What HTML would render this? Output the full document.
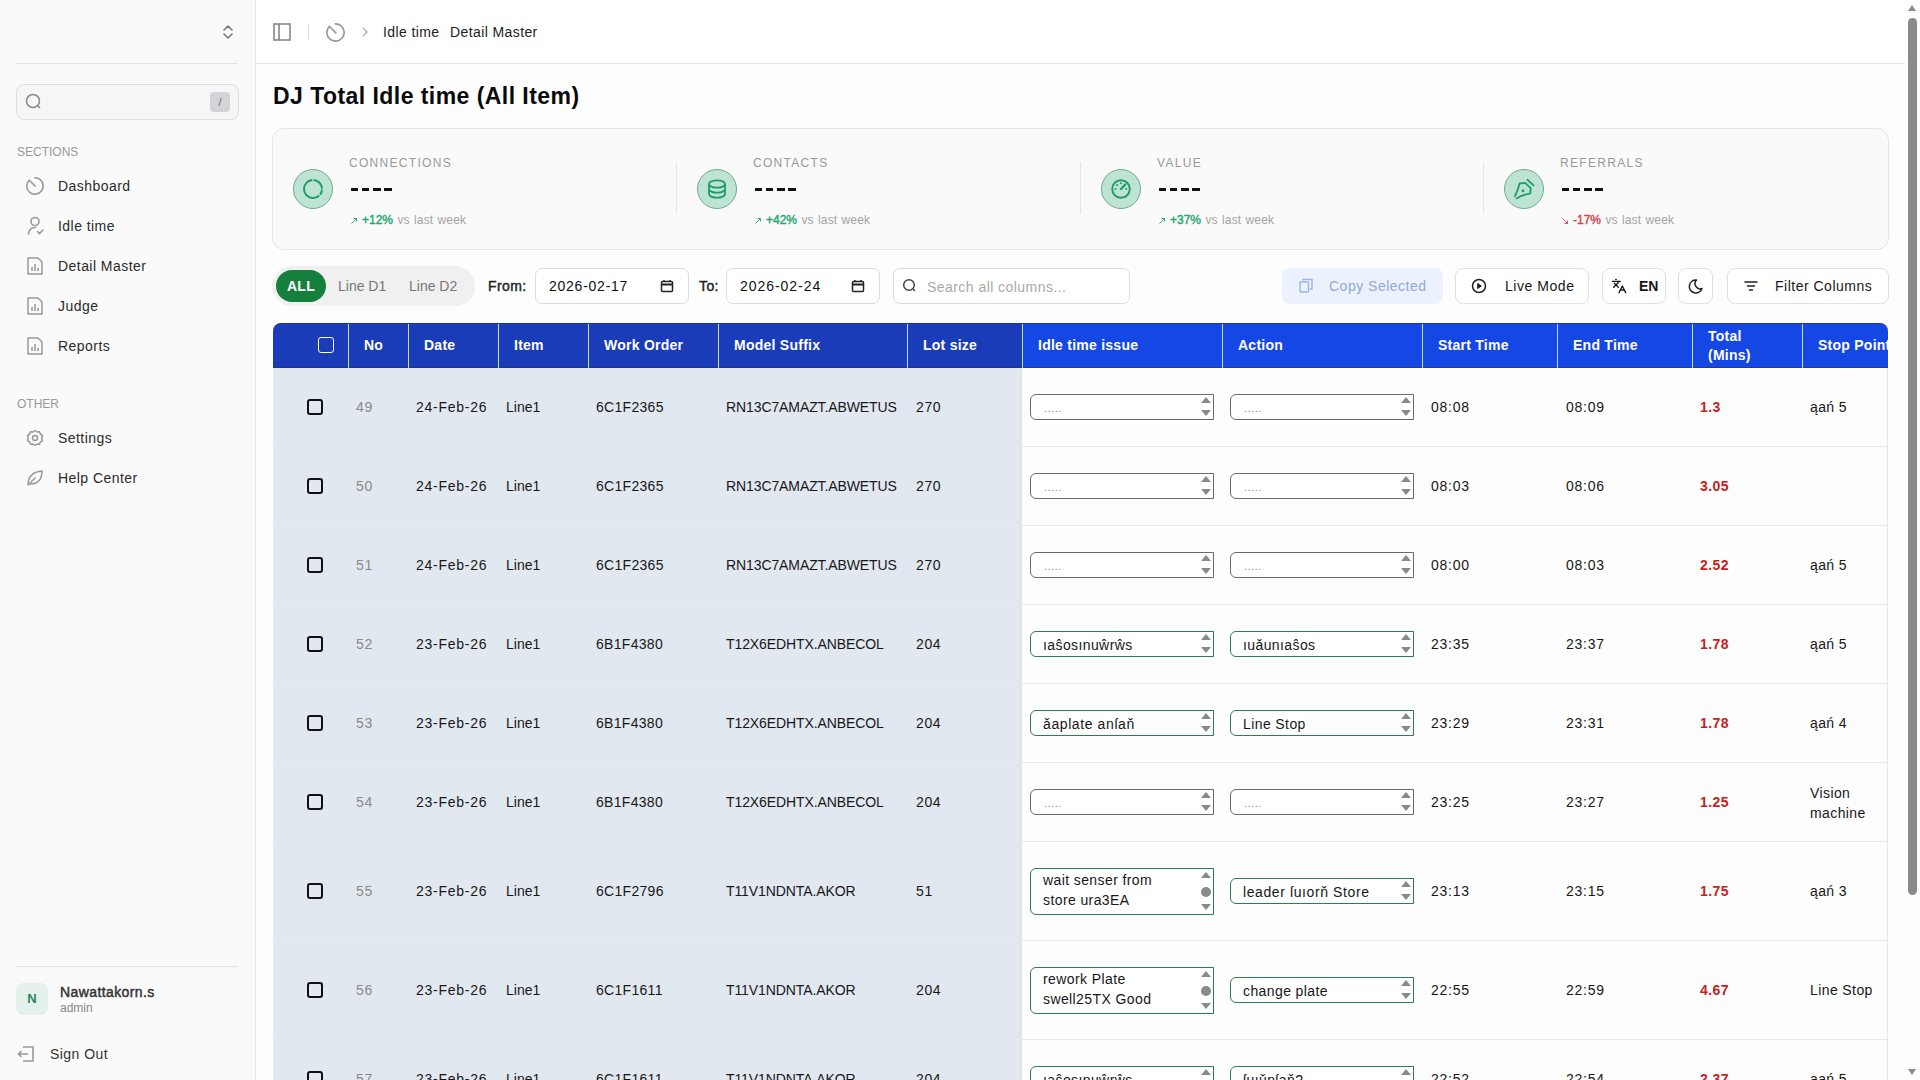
<!DOCTYPE html>
<html><head><meta charset="utf-8">
<style>
*{box-sizing:border-box;margin:0;padding:0}
html,body{width:1920px;height:1080px;overflow:hidden;background:#fafafa;font-family:"Liberation Sans",sans-serif;color:#0a0a0a}
.abs{position:absolute}
#side{position:absolute;left:0;top:0;width:256px;height:1080px;background:#fafafa;border-right:1px solid #e5e5e5}
#hdr{position:absolute;left:256px;top:0;width:1650px;height:64px;background:#fff;border-bottom:1px solid #e5e5e5}
#main{position:absolute;left:256px;top:64px;width:1650px;height:1016px;background:#fdfdfd}
.nav{position:absolute;left:58px;font-size:14px;color:#2b2b2b;letter-spacing:0.45px}
.navi{position:absolute;left:26px;width:18px;height:18px}
.lab{position:absolute;left:17px;font-size:12px;color:#999;letter-spacing:0}
svg{display:block}
.stat-ic{position:absolute;width:40px;height:40px;border-radius:50%;background:#bde4d3;border:1px solid #72a88f}
.stat-l{position:absolute;font-size:12px;letter-spacing:1.3px;color:#999}
.stat-v{position:absolute;font-size:22px;font-weight:bold;letter-spacing:1px;color:#111}
.stat-d{position:absolute;font-size:12px;color:#a3a3a3;letter-spacing:0.1px;word-spacing:1px}
.up{color:#1fa774;-webkit-text-stroke:0.4px #1fa774;letter-spacing:0}
.dn{color:#d9414a;-webkit-text-stroke:0.4px #d9414a;letter-spacing:0}
.btn{position:absolute;top:268px;height:36px;border:1px solid #e0e0e0;border-radius:8px;background:#fff;font-size:14px;color:#171717}
.inp{position:absolute;top:268px;height:36px;border:1px solid #dcdcdc;border-radius:7px;background:#fff;font-size:14px;color:#171717}
.th{position:absolute;top:323px;height:45px;color:#fff;font-weight:bold;font-size:14px;letter-spacing:0.25px}
</style></head><body>

<!-- SIDEBAR -->
<div id="side">
  <div class="abs" style="left:221px;top:23px;">
    <svg width="14" height="18" viewBox="0 0 14 18"><path d="M3 7 L7 3 L11 7 M3 11 L7 15 L11 11" fill="none" stroke="#777" stroke-width="1.6" stroke-linecap="round" stroke-linejoin="round"/></svg>
  </div>
  <div class="abs" style="left:16px;top:63px;width:222px;height:1px;background:#e5e5e5"></div>
  <div class="abs" style="left:16px;top:84px;width:223px;height:36px;border:1px solid #dedede;border-radius:8px;background:#f6f6f6"></div>
  <div class="abs" style="left:25px;top:93px;"><svg width="18" height="18" viewBox="0 0 18 18"><circle cx="8" cy="8" r="6.5" fill="none" stroke="#888" stroke-width="1.5"/><path d="M13 13 L15 15" stroke="#888" stroke-width="1.5"/></svg></div>
  <div class="abs" style="left:210px;top:92px;width:20px;height:20px;background:#d4d4d8;border-radius:4px;font-size:11px;color:#666;text-align:center;line-height:20px">/</div>

  <div class="lab" style="top:145px">SECTIONS</div>
  <div class="navi" style="top:177px"><svg width="18" height="18" viewBox="0 0 18 18"><circle cx="9" cy="9" r="8.2" fill="none" stroke="#999" stroke-width="1.6" stroke-dasharray="45.8 5.7" transform="rotate(265 9 9)"/><path d="M3.3 3.3 L9.3 9.3" stroke="#999" stroke-width="1.6" stroke-linecap="round"/></svg></div>
  <div class="nav" style="top:178px">Dashboard</div>
  <div class="navi" style="top:216px;left:27px"><svg width="18" height="20" viewBox="0 0 18 20"><circle cx="8" cy="5.5" r="4" fill="none" stroke="#999" stroke-width="1.6"/><path d="M1.5 18 C2 13 5 11.5 8.5 11.5" fill="none" stroke="#999" stroke-width="1.6" stroke-linecap="round"/><path d="M10.5 15.5 L12.5 17.5 L16 14" fill="none" stroke="#999" stroke-width="1.6" stroke-linecap="round"/></svg></div>
  <div class="nav" style="top:218px">Idle time</div>
  <div class="navi" style="top:257px"><svg width="18" height="18" viewBox="0 0 18 18"><path d="M2 1 H12 L16 5 V17 H2 Z" fill="none" stroke="#999" stroke-width="1.5"/><path d="M6 14 V10 M9 14 V7 M12 14 V11" stroke="#999" stroke-width="1.5"/></svg></div>
  <div class="nav" style="top:258px">Detail Master</div>
  <div class="navi" style="top:297px"><svg width="18" height="18" viewBox="0 0 18 18"><path d="M2 1 H12 L16 5 V17 H2 Z" fill="none" stroke="#999" stroke-width="1.5"/><path d="M6 14 V10 M9 14 V7 M12 14 V11" stroke="#999" stroke-width="1.5"/></svg></div>
  <div class="nav" style="top:298px">Judge</div>
  <div class="navi" style="top:337px"><svg width="18" height="18" viewBox="0 0 18 18"><path d="M2 1 H12 L16 5 V17 H2 Z" fill="none" stroke="#999" stroke-width="1.5"/><path d="M6 14 V10 M9 14 V7 M12 14 V11" stroke="#999" stroke-width="1.5"/></svg></div>
  <div class="nav" style="top:338px">Reports</div>

  <div class="lab" style="top:397px">OTHER</div>
  <div class="navi" style="top:429px"><svg width="18" height="18" viewBox="0 0 18 18"><path d="M9 1.5 L11 3 L13.5 2.7 L14.3 5 L16.5 6.3 L15.8 9 L16.5 11.7 L14.3 13 L13.5 15.3 L11 15 L9 16.5 L7 15 L4.5 15.3 L3.7 13 L1.5 11.7 L2.2 9 L1.5 6.3 L3.7 5 L4.5 2.7 L7 3 Z" fill="none" stroke="#999" stroke-width="1.5" stroke-linejoin="round"/><circle cx="9" cy="9" r="2.5" fill="none" stroke="#999" stroke-width="1.5"/></svg></div>
  <div class="nav" style="top:430px">Settings</div>
  <div class="navi" style="top:469px"><svg width="18" height="18" viewBox="0 0 18 18"><path d="M2 16 C2 8 6 3 16 2 C16 10 12 15 4 15 M2 16 L9 9" fill="none" stroke="#999" stroke-width="1.5" stroke-linecap="round"/></svg></div>
  <div class="nav" style="top:470px">Help Center</div>

  <div class="abs" style="left:16px;top:966px;width:222px;height:1px;background:#e5e5e5"></div>
  <div class="abs" style="left:16px;top:983px;width:32px;height:32px;border-radius:8px;background:#e3f0eb;color:#1f8a5b;font-weight:bold;font-size:13px;text-align:center;line-height:32px">N</div>
  <div class="abs" style="left:60px;top:984px;font-size:14px;color:#333;-webkit-text-stroke:0.45px #333;letter-spacing:0.4px">Nawattakorn.s</div>
  <div class="abs" style="left:60px;top:1001px;font-size:12px;color:#888">admin</div>
  <div class="abs" style="left:17px;top:1045px"><svg width="18" height="18" viewBox="0 0 18 18"><path d="M6 2 H16 V16 H6 M1.5 9 H11 M4.5 6 L1.5 9 L4.5 12" fill="none" stroke="#999" stroke-width="1.6"/></svg></div>
  <div class="abs" style="left:50px;top:1046px;font-size:14px;color:#333;letter-spacing:0.45px">Sign Out</div>
</div>

<!-- HEADER -->
<div id="hdr">
  <div class="abs" style="left:17px;top:23px"><svg width="18" height="18" viewBox="0 0 18 18"><rect x="1" y="1" width="16" height="16" fill="none" stroke="#888" stroke-width="1.6"/><path d="M6 1 V17" stroke="#888" stroke-width="1.6"/></svg></div>
  <div class="abs" style="left:52px;top:24px;width:1px;height:16px;background:#ddd"></div>
  <div class="abs" style="left:70px;top:23px"><svg width="19" height="19" viewBox="0 0 18 18"><circle cx="9" cy="9" r="8.2" fill="none" stroke="#999" stroke-width="1.6" stroke-dasharray="45.8 5.7" transform="rotate(265 9 9)"/><path d="M3.3 3.3 L9.3 9.3" stroke="#999" stroke-width="1.6" stroke-linecap="round"/></svg></div>
  <div class="abs" style="left:105px;top:25px"><svg width="8" height="14" viewBox="0 0 8 14"><path d="M2 3 L6 7 L2 11" fill="none" stroke="#aaa" stroke-width="1.4"/></svg></div>
  <div class="abs" style="left:127px;top:24px;font-size:14px;color:#222;letter-spacing:0.4px">Idle time</div>
  <div class="abs" style="left:194px;top:24px;font-size:14px;color:#222;letter-spacing:0.4px">Detail Master</div>
</div>

<!-- MAIN -->
<div id="main"></div>
<div class="abs" style="left:273px;top:83px;font-size:23px;line-height:26px;font-weight:bold;letter-spacing:0.45px;color:#0a0a0a">DJ Total Idle time (All Item)</div>

<!-- STATS CARD -->
<div class="abs" style="left:272px;top:128px;width:1617px;height:122px;border:1px solid #e5e5e5;border-radius:12px;background:#fafafa"></div>
<div class="abs" style="left:676px;top:162px;width:1px;height:52px;background:#e5e5e5"></div>
<div class="abs" style="left:1080px;top:162px;width:1px;height:52px;background:#e5e5e5"></div>
<div class="abs" style="left:1483px;top:162px;width:1px;height:52px;background:#e5e5e5"></div>

<div class="stat-ic" style="left:293px;top:169px"></div>
<div class="abs" style="left:293px;top:169px"><svg width="40" height="40" viewBox="0 0 40 40"><circle cx="20" cy="20" r="9" fill="none" stroke="#1f9a6a" stroke-width="2" stroke-dasharray="5.34 1.26 34.24 1.26 13.19 1.26" transform="rotate(4 20 20)"/></svg></div>
<div class="stat-l" style="left:349px;top:156px">CONNECTIONS</div>
<div class="abs" style="left:350.5px;top:188px;width:7.8px;height:3px;background:#111"></div>
<div class="abs" style="left:361.6px;top:188px;width:7.8px;height:3px;background:#111"></div>
<div class="abs" style="left:372.8px;top:188px;width:7.8px;height:3px;background:#111"></div>
<div class="abs" style="left:383.9px;top:188px;width:7.8px;height:3px;background:#111"></div>
<div class="abs" style="left:350px;top:217px"><svg width="8" height="8" viewBox="0 0 8 8"><path d="M1.5 6.5 L6.5 1.5 M3.5 1.5 H6.5 V4.5" fill="none" stroke="#1fa774" stroke-width="0.9"/></svg></div>
<div class="stat-d" style="left:362px;top:213px"><span class="up">+12%</span> vs last week</div>
<div class="stat-ic" style="left:697px;top:169px"></div>
<div class="abs" style="left:697px;top:169px"><svg width="40" height="40" viewBox="0 0 40 40"><ellipse cx="20" cy="15" rx="8" ry="3.7" fill="none" stroke="#1f9a6a" stroke-width="1.8"/><path d="M12 15 V25 A8 3.7 0 0 0 28 25 V15 M12 20 A8 3.7 0 0 0 28 20" fill="none" stroke="#1f9a6a" stroke-width="1.8"/></svg></div>
<div class="stat-l" style="left:753px;top:156px">CONTACTS</div>
<div class="abs" style="left:754.5px;top:188px;width:7.8px;height:3px;background:#111"></div>
<div class="abs" style="left:765.6px;top:188px;width:7.8px;height:3px;background:#111"></div>
<div class="abs" style="left:776.8px;top:188px;width:7.8px;height:3px;background:#111"></div>
<div class="abs" style="left:788.0px;top:188px;width:7.8px;height:3px;background:#111"></div>
<div class="abs" style="left:754px;top:217px"><svg width="8" height="8" viewBox="0 0 8 8"><path d="M1.5 6.5 L6.5 1.5 M3.5 1.5 H6.5 V4.5" fill="none" stroke="#1fa774" stroke-width="0.9"/></svg></div>
<div class="stat-d" style="left:766px;top:213px"><span class="up">+42%</span> vs last week</div>
<div class="stat-ic" style="left:1101px;top:169px"></div>
<div class="abs" style="left:1101px;top:169px"><svg width="40" height="40" viewBox="0 0 40 40"><circle cx="20" cy="20" r="8.8" fill="none" stroke="#1f9a6a" stroke-width="1.9"/><path d="M20 20 L24.3 15.5" stroke="#1f9a6a" stroke-width="2.2" stroke-linecap="round"/><circle cx="14.5" cy="20" r="1" fill="#1f9a6a"/><circle cx="16.2" cy="16" r="1" fill="#1f9a6a"/><circle cx="20" cy="14.2" r="1" fill="#1f9a6a"/><circle cx="25.3" cy="20" r="1" fill="#1f9a6a"/></svg></div>
<div class="stat-l" style="left:1157px;top:156px">VALUE</div>
<div class="abs" style="left:1158.5px;top:188px;width:7.8px;height:3px;background:#111"></div>
<div class="abs" style="left:1169.7px;top:188px;width:7.8px;height:3px;background:#111"></div>
<div class="abs" style="left:1180.8px;top:188px;width:7.8px;height:3px;background:#111"></div>
<div class="abs" style="left:1192.0px;top:188px;width:7.8px;height:3px;background:#111"></div>
<div class="abs" style="left:1158px;top:217px"><svg width="8" height="8" viewBox="0 0 8 8"><path d="M1.5 6.5 L6.5 1.5 M3.5 1.5 H6.5 V4.5" fill="none" stroke="#1fa774" stroke-width="0.9"/></svg></div>
<div class="stat-d" style="left:1170px;top:213px"><span class="up">+37%</span> vs last week</div>
<div class="stat-ic" style="left:1504px;top:169px"></div>
<div class="abs" style="left:1504px;top:169px"><svg width="40" height="40" viewBox="0 0 40 40"><path d="M10.9 27.2 C13 23 14.5 19 15.6 14.5 L21.1 13.8 L26.7 19.1 L26.2 24.7 C21 25.5 16 27 12.6 29.4" fill="none" stroke="#1f9a6a" stroke-width="1.8" stroke-linejoin="round" stroke-linecap="round"/><path d="M23.5 10.8 L29.6 16.4" stroke="#1f9a6a" stroke-width="1.8" stroke-linecap="round"/><circle cx="19" cy="21.9" r="1.4" fill="#1f9a6a"/></svg></div>
<div class="stat-l" style="left:1560px;top:156px">REFERRALS</div>
<div class="abs" style="left:1561.5px;top:188px;width:7.8px;height:3px;background:#111"></div>
<div class="abs" style="left:1572.7px;top:188px;width:7.8px;height:3px;background:#111"></div>
<div class="abs" style="left:1583.8px;top:188px;width:7.8px;height:3px;background:#111"></div>
<div class="abs" style="left:1595.0px;top:188px;width:7.8px;height:3px;background:#111"></div>
<div class="abs" style="left:1561px;top:217px"><svg width="8" height="8" viewBox="0 0 8 8"><path d="M1.5 1.5 L6.5 6.5 M3.5 6.5 H6.5 V3.5" fill="none" stroke="#d9414a" stroke-width="0.9"/></svg></div>
<div class="stat-d" style="left:1573px;top:213px"><span class="dn">-17%</span> vs last week</div>

<!-- TOOLBAR -->
<div class="abs" style="left:272px;top:266px;width:203px;height:40px;border-radius:20px;background:#f0f0f0"></div>
<div class="abs" style="left:276px;top:270px;width:50px;height:32px;border-radius:16px;background:#15803d;color:#fff;font-weight:bold;font-size:14px;text-align:center;line-height:32px;letter-spacing:0.3px">ALL</div>
<div class="abs" style="left:338px;top:278px;font-size:14px;color:#777">Line D1</div>
<div class="abs" style="left:409px;top:278px;font-size:14px;color:#777">Line D2</div>
<div class="abs" style="left:488px;top:278px;font-size:14px;color:#222;-webkit-text-stroke:0.4px #222;letter-spacing:0.4px">From:</div>
<div class="inp" style="left:535px;width:154px"></div><div class="abs" style="left:549px;top:278px;font-size:14px;letter-spacing:0.75px;color:#111">2026-02-17</div><div class="abs" style="left:660px;top:279px"><svg width="14" height="14" viewBox="0 0 14 14"><rect x="1.5" y="2.5" width="11" height="10" rx="1" fill="none" stroke="#222" stroke-width="1.5"/><path d="M1.5 5.5 H12.5" stroke="#222" stroke-width="2"/><path d="M4 1 V3 M10 1 V3" stroke="#222" stroke-width="1.4"/></svg></div>
<div class="abs" style="left:699px;top:278px;font-size:14px;color:#222;-webkit-text-stroke:0.4px #222;letter-spacing:0.4px">To:</div>
<div class="inp" style="left:726px;width:154px"></div><div class="abs" style="left:740px;top:278px;font-size:14px;letter-spacing:0.95px;color:#111">2026-02-24</div><div class="abs" style="left:851px;top:279px"><svg width="14" height="14" viewBox="0 0 14 14"><rect x="1.5" y="2.5" width="11" height="10" rx="1" fill="none" stroke="#222" stroke-width="1.5"/><path d="M1.5 5.5 H12.5" stroke="#222" stroke-width="2"/><path d="M4 1 V3 M10 1 V3" stroke="#222" stroke-width="1.4"/></svg></div>
<div class="inp" style="left:893px;width:237px"></div><div class="abs" style="left:902px;top:278px"><svg width="16" height="16" viewBox="0 0 16 16"><circle cx="7" cy="7" r="5.3" fill="none" stroke="#444" stroke-width="1.5"/><path d="M11 11 L13 13" stroke="#444" stroke-width="1.5"/></svg></div><div class="abs" style="left:927px;top:279px;font-size:14px;color:#aaa;letter-spacing:0.45px">Search all columns...</div>
<div class="abs" style="left:1282px;top:268px;width:161px;height:36px;border-radius:8px;background:#ecf2fd"></div>
<div class="abs" style="left:1299px;top:278px"><svg width="14" height="16" viewBox="0 0 14 16"><rect x="1" y="4" width="8.5" height="10" rx="1" fill="none" stroke="#9db3df" stroke-width="1.4"/><path d="M4 2.5 V1.5 H13 V11 H11" fill="none" stroke="#9db3df" stroke-width="1.4"/></svg></div>
<div class="abs" style="left:1329px;top:278px;font-size:14px;color:#92a8d8;letter-spacing:0.5px">Copy Selected</div>
<div class="btn" style="left:1455px;width:134px"></div><div class="abs" style="left:1471px;top:278px"><svg width="16" height="16" viewBox="0 0 16 16"><circle cx="8" cy="8" r="6.5" fill="none" stroke="#222" stroke-width="1.5"/><path d="M6.7 5.5 L10.3 8 L6.7 10.5 Z" fill="#222" stroke="#222" stroke-width="1" stroke-linejoin="round"/></svg></div><div class="abs" style="left:1505px;top:278px;font-size:14px;color:#171717;letter-spacing:0.55px">Live Mode</div>
<div class="btn" style="left:1602px;width:64px"></div><div class="abs" style="left:1610.7px;top:278px"><svg width="16" height="16" viewBox="0 0 24 24"><path d="M5 8 L11 14 M4 14 L10 8 L12 5 M2 5 H14 M7 2 H8 M22 22 L17 12 L12 22 M14 18 H20" fill="none" stroke="#171717" stroke-width="2" stroke-linecap="round" stroke-linejoin="round"/></svg></div><div class="abs" style="left:1639px;top:278px;font-size:14px;font-weight:bold;color:#171717">EN</div>
<div class="btn" style="left:1678px;width:35px"></div><div class="abs" style="left:1687px;top:278px"><svg width="17" height="17" viewBox="0 0 17 17"><path d="M9.5 2 A6.5 6.5 0 1 0 15 10.5 A5.2 5.2 0 0 1 9.5 2 Z" fill="none" stroke="#222" stroke-width="1.5" stroke-linejoin="round"/></svg></div>
<div class="btn" style="left:1727px;width:162px"></div><div class="abs" style="left:1743px;top:279px"><svg width="16" height="14" viewBox="0 0 16 14"><path d="M2 3 H14 M4.5 7 H11.5 M6.5 11 H9.5" stroke="#222" stroke-width="1.5" stroke-linecap="round"/></svg></div><div class="abs" style="left:1775px;top:278px;font-size:14px;color:#171717;letter-spacing:0.5px">Filter Columns</div>

<!-- TABLE -->
<div class="abs" style="left:273px;top:368px;width:749px;height:712px;background:#e2e8f0"></div>
<div class="abs" style="left:1022px;top:368px;width:866px;height:712px;background:#fdfdfd;border-right:1px solid #e5e5e5"></div>
<div class="abs" style="left:1019px;top:368px;width:3px;height:712px;background:linear-gradient(90deg,rgba(226,228,232,0),#dfe2e6)"></div>
<div class="abs" style="left:273px;top:323px;width:749px;height:45px;background:#1b3cb9;border-top-left-radius:8px;border-top:1px solid #1a3596;border-bottom:1px solid #1a3596"></div>
<div class="abs" style="left:1022px;top:323px;width:866px;height:45px;background:#1547e5;border-top-right-radius:8px;border-top:1px solid #1a3aa6;border-bottom:1px solid #1a3aa6"></div>
<div class="abs" style="left:348px;top:324px;width:1px;height:44px;background:#c4d9fb"></div>
<div class="abs" style="left:408px;top:324px;width:1px;height:44px;background:#c4d9fb"></div>
<div class="abs" style="left:498px;top:324px;width:1px;height:44px;background:#c4d9fb"></div>
<div class="abs" style="left:588px;top:324px;width:1px;height:44px;background:#c4d9fb"></div>
<div class="abs" style="left:718px;top:324px;width:1px;height:44px;background:#c4d9fb"></div>
<div class="abs" style="left:907px;top:324px;width:1px;height:44px;background:#c4d9fb"></div>
<div class="abs" style="left:1022px;top:324px;width:1px;height:44px;background:#c4d9fb"></div>
<div class="abs" style="left:1222px;top:324px;width:1px;height:44px;background:#c4d9fb"></div>
<div class="abs" style="left:1422px;top:324px;width:1px;height:44px;background:#c4d9fb"></div>
<div class="abs" style="left:1557px;top:324px;width:1px;height:44px;background:#c4d9fb"></div>
<div class="abs" style="left:1692px;top:324px;width:1px;height:44px;background:#c4d9fb"></div>
<div class="abs" style="left:1802px;top:324px;width:1px;height:44px;background:#c4d9fb"></div>
<div class="abs" style="left:318px;top:337px;width:16px;height:16px;border:1px solid #fff;border-radius:3px"></div>
<div class="th" style="left:364px;line-height:45px;white-space:nowrap;overflow:hidden;width:44px">No</div>
<div class="th" style="left:424px;line-height:45px;white-space:nowrap;overflow:hidden;width:74px">Date</div>
<div class="th" style="left:514px;line-height:45px;white-space:nowrap;overflow:hidden;width:74px">Item</div>
<div class="th" style="left:604px;line-height:45px;white-space:nowrap;overflow:hidden;width:114px">Work Order</div>
<div class="th" style="left:734px;line-height:45px;white-space:nowrap;overflow:hidden;width:173px">Model Suffix</div>
<div class="th" style="left:923px;line-height:45px;white-space:nowrap;overflow:hidden;width:99px">Lot size</div>
<div class="th" style="left:1038px;line-height:45px;white-space:nowrap;overflow:hidden;width:184px">Idle time issue</div>
<div class="th" style="left:1238px;line-height:45px;white-space:nowrap;overflow:hidden;width:184px">Action</div>
<div class="th" style="left:1438px;line-height:45px;white-space:nowrap;overflow:hidden;width:119px">Start Time</div>
<div class="th" style="left:1573px;line-height:45px;white-space:nowrap;overflow:hidden;width:119px">End Time</div>
<div class="th" style="left:1708px;top:326px;line-height:19px;padding-top:1px">Total<br>(Mins)</div>
<div class="th" style="left:1818px;line-height:45px;white-space:nowrap;overflow:hidden;width:70px">Stop Point</div>
<div class="abs" style="left:273px;top:446px;width:746px;height:1px;background:#e6ebf1"></div>
<div class="abs" style="left:1022px;top:446px;width:866px;height:1px;background:#e8e8e8"></div>
<div class="abs" style="left:273px;top:525px;width:746px;height:1px;background:#e6ebf1"></div>
<div class="abs" style="left:1022px;top:525px;width:866px;height:1px;background:#e8e8e8"></div>
<div class="abs" style="left:273px;top:604px;width:746px;height:1px;background:#e6ebf1"></div>
<div class="abs" style="left:1022px;top:604px;width:866px;height:1px;background:#e8e8e8"></div>
<div class="abs" style="left:273px;top:683px;width:746px;height:1px;background:#e6ebf1"></div>
<div class="abs" style="left:1022px;top:683px;width:866px;height:1px;background:#e8e8e8"></div>
<div class="abs" style="left:273px;top:762px;width:746px;height:1px;background:#e6ebf1"></div>
<div class="abs" style="left:1022px;top:762px;width:866px;height:1px;background:#e8e8e8"></div>
<div class="abs" style="left:273px;top:841px;width:746px;height:1px;background:#e6ebf1"></div>
<div class="abs" style="left:1022px;top:841px;width:866px;height:1px;background:#e8e8e8"></div>
<div class="abs" style="left:273px;top:940px;width:746px;height:1px;background:#e6ebf1"></div>
<div class="abs" style="left:1022px;top:940px;width:866px;height:1px;background:#e8e8e8"></div>
<div class="abs" style="left:273px;top:1039px;width:746px;height:1px;background:#e6ebf1"></div>
<div class="abs" style="left:1022px;top:1039px;width:866px;height:1px;background:#e8e8e8"></div>
<div class="abs" style="left:307px;top:399px;width:16px;height:16px;border:2px solid #111;border-radius:3px"></div>
<div class="abs" style="left:356px;top:398px;font-size:14px;line-height:18px;color:#8a8a8a;white-space:nowrap;letter-spacing:0.8px">49</div>
<div class="abs" style="left:416px;top:398px;font-size:14px;line-height:18px;color:#171717;white-space:nowrap;letter-spacing:0.75px">24-Feb-26</div>
<div class="abs" style="left:506px;top:398px;font-size:14px;line-height:18px;color:#171717;white-space:nowrap;letter-spacing:0px">Line1</div>
<div class="abs" style="left:596px;top:398px;font-size:14px;line-height:18px;color:#171717;white-space:nowrap;letter-spacing:0.3px">6C1F2365</div>
<div class="abs" style="left:726px;top:398px;font-size:14px;line-height:18px;color:#171717;white-space:nowrap;letter-spacing:-0.1px">RN13C7AMAZT.ABWETUS</div>
<div class="abs" style="left:916px;top:398px;font-size:14px;line-height:18px;color:#171717;white-space:nowrap;letter-spacing:0.6px">270</div>
<div class="abs" style="left:1030px;top:394px;width:184px;height:26px;border:1px solid #6b6b6b;border-radius:6px 0 0 6px;background:#fff"></div><div class="abs" style="left:1044px;top:402px;font-size:11px;color:#888;letter-spacing:0.5px">.....</div><div class="abs" style="left:1201px;top:397px;width:0;height:0;border-left:5px solid transparent;border-right:5px solid transparent;border-bottom:6px solid #8a8a8a"></div><div class="abs" style="left:1201px;top:410px;width:0;height:0;border-left:5px solid transparent;border-right:5px solid transparent;border-top:6px solid #8a8a8a"></div>
<div class="abs" style="left:1230px;top:394px;width:184px;height:26px;border:1px solid #6b6b6b;border-radius:6px 0 0 6px;background:#fff"></div><div class="abs" style="left:1244px;top:402px;font-size:11px;color:#888;letter-spacing:0.5px">.....</div><div class="abs" style="left:1401px;top:397px;width:0;height:0;border-left:5px solid transparent;border-right:5px solid transparent;border-bottom:6px solid #8a8a8a"></div><div class="abs" style="left:1401px;top:410px;width:0;height:0;border-left:5px solid transparent;border-right:5px solid transparent;border-top:6px solid #8a8a8a"></div>
<div class="abs" style="left:1431px;top:398px;font-size:14px;line-height:18px;color:#171717;letter-spacing:0.75px">08:08</div>
<div class="abs" style="left:1566px;top:398px;font-size:14px;line-height:18px;color:#171717;letter-spacing:0.75px">08:09</div>
<div class="abs" style="left:1700px;top:398px;font-size:14px;line-height:18px;color:#c81e1e;font-weight:bold;letter-spacing:0.4px">1.3</div>
<div class="abs" style="left:1810px;top:398px;font-size:14px;line-height:18px;color:#171717;white-space:nowrap;letter-spacing:0.4px">ąań 5</div>
<div class="abs" style="left:307px;top:478px;width:16px;height:16px;border:2px solid #111;border-radius:3px"></div>
<div class="abs" style="left:356px;top:477px;font-size:14px;line-height:18px;color:#8a8a8a;white-space:nowrap;letter-spacing:0.8px">50</div>
<div class="abs" style="left:416px;top:477px;font-size:14px;line-height:18px;color:#171717;white-space:nowrap;letter-spacing:0.75px">24-Feb-26</div>
<div class="abs" style="left:506px;top:477px;font-size:14px;line-height:18px;color:#171717;white-space:nowrap;letter-spacing:0px">Line1</div>
<div class="abs" style="left:596px;top:477px;font-size:14px;line-height:18px;color:#171717;white-space:nowrap;letter-spacing:0.3px">6C1F2365</div>
<div class="abs" style="left:726px;top:477px;font-size:14px;line-height:18px;color:#171717;white-space:nowrap;letter-spacing:-0.1px">RN13C7AMAZT.ABWETUS</div>
<div class="abs" style="left:916px;top:477px;font-size:14px;line-height:18px;color:#171717;white-space:nowrap;letter-spacing:0.6px">270</div>
<div class="abs" style="left:1030px;top:473px;width:184px;height:26px;border:1px solid #6b6b6b;border-radius:6px 0 0 6px;background:#fff"></div><div class="abs" style="left:1044px;top:481px;font-size:11px;color:#888;letter-spacing:0.5px">.....</div><div class="abs" style="left:1201px;top:476px;width:0;height:0;border-left:5px solid transparent;border-right:5px solid transparent;border-bottom:6px solid #8a8a8a"></div><div class="abs" style="left:1201px;top:489px;width:0;height:0;border-left:5px solid transparent;border-right:5px solid transparent;border-top:6px solid #8a8a8a"></div>
<div class="abs" style="left:1230px;top:473px;width:184px;height:26px;border:1px solid #6b6b6b;border-radius:6px 0 0 6px;background:#fff"></div><div class="abs" style="left:1244px;top:481px;font-size:11px;color:#888;letter-spacing:0.5px">.....</div><div class="abs" style="left:1401px;top:476px;width:0;height:0;border-left:5px solid transparent;border-right:5px solid transparent;border-bottom:6px solid #8a8a8a"></div><div class="abs" style="left:1401px;top:489px;width:0;height:0;border-left:5px solid transparent;border-right:5px solid transparent;border-top:6px solid #8a8a8a"></div>
<div class="abs" style="left:1431px;top:477px;font-size:14px;line-height:18px;color:#171717;letter-spacing:0.75px">08:03</div>
<div class="abs" style="left:1566px;top:477px;font-size:14px;line-height:18px;color:#171717;letter-spacing:0.75px">08:06</div>
<div class="abs" style="left:1700px;top:477px;font-size:14px;line-height:18px;color:#c81e1e;font-weight:bold;letter-spacing:0.4px">3.05</div>
<div class="abs" style="left:1810px;top:477px;font-size:14px;line-height:18px;color:#171717;white-space:nowrap;letter-spacing:0.4px"></div>
<div class="abs" style="left:307px;top:557px;width:16px;height:16px;border:2px solid #111;border-radius:3px"></div>
<div class="abs" style="left:356px;top:556px;font-size:14px;line-height:18px;color:#8a8a8a;white-space:nowrap;letter-spacing:0.8px">51</div>
<div class="abs" style="left:416px;top:556px;font-size:14px;line-height:18px;color:#171717;white-space:nowrap;letter-spacing:0.75px">24-Feb-26</div>
<div class="abs" style="left:506px;top:556px;font-size:14px;line-height:18px;color:#171717;white-space:nowrap;letter-spacing:0px">Line1</div>
<div class="abs" style="left:596px;top:556px;font-size:14px;line-height:18px;color:#171717;white-space:nowrap;letter-spacing:0.3px">6C1F2365</div>
<div class="abs" style="left:726px;top:556px;font-size:14px;line-height:18px;color:#171717;white-space:nowrap;letter-spacing:-0.1px">RN13C7AMAZT.ABWETUS</div>
<div class="abs" style="left:916px;top:556px;font-size:14px;line-height:18px;color:#171717;white-space:nowrap;letter-spacing:0.6px">270</div>
<div class="abs" style="left:1030px;top:552px;width:184px;height:26px;border:1px solid #6b6b6b;border-radius:6px 0 0 6px;background:#fff"></div><div class="abs" style="left:1044px;top:560px;font-size:11px;color:#888;letter-spacing:0.5px">.....</div><div class="abs" style="left:1201px;top:555px;width:0;height:0;border-left:5px solid transparent;border-right:5px solid transparent;border-bottom:6px solid #8a8a8a"></div><div class="abs" style="left:1201px;top:568px;width:0;height:0;border-left:5px solid transparent;border-right:5px solid transparent;border-top:6px solid #8a8a8a"></div>
<div class="abs" style="left:1230px;top:552px;width:184px;height:26px;border:1px solid #6b6b6b;border-radius:6px 0 0 6px;background:#fff"></div><div class="abs" style="left:1244px;top:560px;font-size:11px;color:#888;letter-spacing:0.5px">.....</div><div class="abs" style="left:1401px;top:555px;width:0;height:0;border-left:5px solid transparent;border-right:5px solid transparent;border-bottom:6px solid #8a8a8a"></div><div class="abs" style="left:1401px;top:568px;width:0;height:0;border-left:5px solid transparent;border-right:5px solid transparent;border-top:6px solid #8a8a8a"></div>
<div class="abs" style="left:1431px;top:556px;font-size:14px;line-height:18px;color:#171717;letter-spacing:0.75px">08:00</div>
<div class="abs" style="left:1566px;top:556px;font-size:14px;line-height:18px;color:#171717;letter-spacing:0.75px">08:03</div>
<div class="abs" style="left:1700px;top:556px;font-size:14px;line-height:18px;color:#c81e1e;font-weight:bold;letter-spacing:0.4px">2.52</div>
<div class="abs" style="left:1810px;top:556px;font-size:14px;line-height:18px;color:#171717;white-space:nowrap;letter-spacing:0.4px">ąań 5</div>
<div class="abs" style="left:307px;top:636px;width:16px;height:16px;border:2px solid #111;border-radius:3px"></div>
<div class="abs" style="left:356px;top:635px;font-size:14px;line-height:18px;color:#8a8a8a;white-space:nowrap;letter-spacing:0.8px">52</div>
<div class="abs" style="left:416px;top:635px;font-size:14px;line-height:18px;color:#171717;white-space:nowrap;letter-spacing:0.75px">23-Feb-26</div>
<div class="abs" style="left:506px;top:635px;font-size:14px;line-height:18px;color:#171717;white-space:nowrap;letter-spacing:0px">Line1</div>
<div class="abs" style="left:596px;top:635px;font-size:14px;line-height:18px;color:#171717;white-space:nowrap;letter-spacing:0.3px">6B1F4380</div>
<div class="abs" style="left:726px;top:635px;font-size:14px;line-height:18px;color:#171717;white-space:nowrap;letter-spacing:-0.1px">T12X6EDHTX.ANBECOL</div>
<div class="abs" style="left:916px;top:635px;font-size:14px;line-height:18px;color:#171717;white-space:nowrap;letter-spacing:0.6px">204</div>
<div class="abs" style="left:1030px;top:631px;width:184px;height:26px;border:1px solid #2e7d4f;border-radius:6px 0 0 6px;background:#fff"></div><div class="abs" style="left:1043px;top:635px;font-size:14px;line-height:20px;color:#171717;white-space:nowrap;letter-spacing:0.4px">ıaŝosınuŵrŵs</div><div class="abs" style="left:1201px;top:634px;width:0;height:0;border-left:5px solid transparent;border-right:5px solid transparent;border-bottom:6px solid #8a8a8a"></div><div class="abs" style="left:1201px;top:647px;width:0;height:0;border-left:5px solid transparent;border-right:5px solid transparent;border-top:6px solid #8a8a8a"></div>
<div class="abs" style="left:1230px;top:631px;width:184px;height:26px;border:1px solid #2e7d4f;border-radius:6px 0 0 6px;background:#fff"></div><div class="abs" style="left:1243px;top:635px;font-size:14px;line-height:20px;color:#171717;white-space:nowrap;letter-spacing:0.4px">ıuǎunıaŝos</div><div class="abs" style="left:1401px;top:634px;width:0;height:0;border-left:5px solid transparent;border-right:5px solid transparent;border-bottom:6px solid #8a8a8a"></div><div class="abs" style="left:1401px;top:647px;width:0;height:0;border-left:5px solid transparent;border-right:5px solid transparent;border-top:6px solid #8a8a8a"></div>
<div class="abs" style="left:1431px;top:635px;font-size:14px;line-height:18px;color:#171717;letter-spacing:0.75px">23:35</div>
<div class="abs" style="left:1566px;top:635px;font-size:14px;line-height:18px;color:#171717;letter-spacing:0.75px">23:37</div>
<div class="abs" style="left:1700px;top:635px;font-size:14px;line-height:18px;color:#c81e1e;font-weight:bold;letter-spacing:0.4px">1.78</div>
<div class="abs" style="left:1810px;top:635px;font-size:14px;line-height:18px;color:#171717;white-space:nowrap;letter-spacing:0.4px">ąań 5</div>
<div class="abs" style="left:307px;top:715px;width:16px;height:16px;border:2px solid #111;border-radius:3px"></div>
<div class="abs" style="left:356px;top:714px;font-size:14px;line-height:18px;color:#8a8a8a;white-space:nowrap;letter-spacing:0.8px">53</div>
<div class="abs" style="left:416px;top:714px;font-size:14px;line-height:18px;color:#171717;white-space:nowrap;letter-spacing:0.75px">23-Feb-26</div>
<div class="abs" style="left:506px;top:714px;font-size:14px;line-height:18px;color:#171717;white-space:nowrap;letter-spacing:0px">Line1</div>
<div class="abs" style="left:596px;top:714px;font-size:14px;line-height:18px;color:#171717;white-space:nowrap;letter-spacing:0.3px">6B1F4380</div>
<div class="abs" style="left:726px;top:714px;font-size:14px;line-height:18px;color:#171717;white-space:nowrap;letter-spacing:-0.1px">T12X6EDHTX.ANBECOL</div>
<div class="abs" style="left:916px;top:714px;font-size:14px;line-height:18px;color:#171717;white-space:nowrap;letter-spacing:0.6px">204</div>
<div class="abs" style="left:1030px;top:710px;width:184px;height:26px;border:1px solid #2e7d4f;border-radius:6px 0 0 6px;background:#fff"></div><div class="abs" style="left:1043px;top:714px;font-size:14px;line-height:20px;color:#171717;white-space:nowrap;letter-spacing:0.4px"><span style="letter-spacing:0.6px">ǎaplate anſaň</span></div><div class="abs" style="left:1201px;top:713px;width:0;height:0;border-left:5px solid transparent;border-right:5px solid transparent;border-bottom:6px solid #8a8a8a"></div><div class="abs" style="left:1201px;top:726px;width:0;height:0;border-left:5px solid transparent;border-right:5px solid transparent;border-top:6px solid #8a8a8a"></div>
<div class="abs" style="left:1230px;top:710px;width:184px;height:26px;border:1px solid #2e7d4f;border-radius:6px 0 0 6px;background:#fff"></div><div class="abs" style="left:1243px;top:714px;font-size:14px;line-height:20px;color:#171717;white-space:nowrap;letter-spacing:0.4px">Line Stop</div><div class="abs" style="left:1401px;top:713px;width:0;height:0;border-left:5px solid transparent;border-right:5px solid transparent;border-bottom:6px solid #8a8a8a"></div><div class="abs" style="left:1401px;top:726px;width:0;height:0;border-left:5px solid transparent;border-right:5px solid transparent;border-top:6px solid #8a8a8a"></div>
<div class="abs" style="left:1431px;top:714px;font-size:14px;line-height:18px;color:#171717;letter-spacing:0.75px">23:29</div>
<div class="abs" style="left:1566px;top:714px;font-size:14px;line-height:18px;color:#171717;letter-spacing:0.75px">23:31</div>
<div class="abs" style="left:1700px;top:714px;font-size:14px;line-height:18px;color:#c81e1e;font-weight:bold;letter-spacing:0.4px">1.78</div>
<div class="abs" style="left:1810px;top:714px;font-size:14px;line-height:18px;color:#171717;white-space:nowrap;letter-spacing:0.4px">ąań 4</div>
<div class="abs" style="left:307px;top:794px;width:16px;height:16px;border:2px solid #111;border-radius:3px"></div>
<div class="abs" style="left:356px;top:793px;font-size:14px;line-height:18px;color:#8a8a8a;white-space:nowrap;letter-spacing:0.8px">54</div>
<div class="abs" style="left:416px;top:793px;font-size:14px;line-height:18px;color:#171717;white-space:nowrap;letter-spacing:0.75px">23-Feb-26</div>
<div class="abs" style="left:506px;top:793px;font-size:14px;line-height:18px;color:#171717;white-space:nowrap;letter-spacing:0px">Line1</div>
<div class="abs" style="left:596px;top:793px;font-size:14px;line-height:18px;color:#171717;white-space:nowrap;letter-spacing:0.3px">6B1F4380</div>
<div class="abs" style="left:726px;top:793px;font-size:14px;line-height:18px;color:#171717;white-space:nowrap;letter-spacing:-0.1px">T12X6EDHTX.ANBECOL</div>
<div class="abs" style="left:916px;top:793px;font-size:14px;line-height:18px;color:#171717;white-space:nowrap;letter-spacing:0.6px">204</div>
<div class="abs" style="left:1030px;top:789px;width:184px;height:26px;border:1px solid #6b6b6b;border-radius:6px 0 0 6px;background:#fff"></div><div class="abs" style="left:1044px;top:797px;font-size:11px;color:#888;letter-spacing:0.5px">.....</div><div class="abs" style="left:1201px;top:792px;width:0;height:0;border-left:5px solid transparent;border-right:5px solid transparent;border-bottom:6px solid #8a8a8a"></div><div class="abs" style="left:1201px;top:805px;width:0;height:0;border-left:5px solid transparent;border-right:5px solid transparent;border-top:6px solid #8a8a8a"></div>
<div class="abs" style="left:1230px;top:789px;width:184px;height:26px;border:1px solid #6b6b6b;border-radius:6px 0 0 6px;background:#fff"></div><div class="abs" style="left:1244px;top:797px;font-size:11px;color:#888;letter-spacing:0.5px">.....</div><div class="abs" style="left:1401px;top:792px;width:0;height:0;border-left:5px solid transparent;border-right:5px solid transparent;border-bottom:6px solid #8a8a8a"></div><div class="abs" style="left:1401px;top:805px;width:0;height:0;border-left:5px solid transparent;border-right:5px solid transparent;border-top:6px solid #8a8a8a"></div>
<div class="abs" style="left:1431px;top:793px;font-size:14px;line-height:18px;color:#171717;letter-spacing:0.75px">23:25</div>
<div class="abs" style="left:1566px;top:793px;font-size:14px;line-height:18px;color:#171717;letter-spacing:0.75px">23:27</div>
<div class="abs" style="left:1700px;top:793px;font-size:14px;line-height:18px;color:#c81e1e;font-weight:bold;letter-spacing:0.4px">1.25</div>
<div class="abs" style="left:1810px;top:783px;font-size:14px;line-height:20px;color:#171717;letter-spacing:0.4px">Vision<br>machine</div>
<div class="abs" style="left:307px;top:883px;width:16px;height:16px;border:2px solid #111;border-radius:3px"></div>
<div class="abs" style="left:356px;top:882px;font-size:14px;line-height:18px;color:#8a8a8a;white-space:nowrap;letter-spacing:0.8px">55</div>
<div class="abs" style="left:416px;top:882px;font-size:14px;line-height:18px;color:#171717;white-space:nowrap;letter-spacing:0.75px">23-Feb-26</div>
<div class="abs" style="left:506px;top:882px;font-size:14px;line-height:18px;color:#171717;white-space:nowrap;letter-spacing:0px">Line1</div>
<div class="abs" style="left:596px;top:882px;font-size:14px;line-height:18px;color:#171717;white-space:nowrap;letter-spacing:0.3px">6C1F2796</div>
<div class="abs" style="left:726px;top:882px;font-size:14px;line-height:18px;color:#171717;white-space:nowrap;letter-spacing:-0.1px">T11V1NDNTA.AKOR</div>
<div class="abs" style="left:916px;top:882px;font-size:14px;line-height:18px;color:#171717;white-space:nowrap;letter-spacing:0.6px">51</div>
<div class="abs" style="left:1030px;top:868px;width:184px;height:47px;border:1px solid #2e7d4f;border-radius:6px 0 0 6px;background:#fff"></div><div class="abs" style="left:1043px;top:870px;font-size:14px;line-height:20px;color:#171717;white-space:nowrap;letter-spacing:0.4px">wait senser from<br>store ura3EA</div><div class="abs" style="left:1201px;top:872px;width:0;height:0;border-left:5px solid transparent;border-right:5px solid transparent;border-bottom:6px solid #8a8a8a"></div><div class="abs" style="left:1201px;top:887px;width:10px;height:10px;border-radius:50%;background:#8a8a8a"></div><div class="abs" style="left:1201px;top:904px;width:0;height:0;border-left:5px solid transparent;border-right:5px solid transparent;border-top:6px solid #8a8a8a"></div>
<div class="abs" style="left:1230px;top:878px;width:184px;height:26px;border:1px solid #2e7d4f;border-radius:6px 0 0 6px;background:#fff"></div><div class="abs" style="left:1243px;top:882px;font-size:14px;line-height:20px;color:#171717;white-space:nowrap;letter-spacing:0.4px"><span style="letter-spacing:0.6px">leader ſuıorň Store</span></div><div class="abs" style="left:1401px;top:881px;width:0;height:0;border-left:5px solid transparent;border-right:5px solid transparent;border-bottom:6px solid #8a8a8a"></div><div class="abs" style="left:1401px;top:894px;width:0;height:0;border-left:5px solid transparent;border-right:5px solid transparent;border-top:6px solid #8a8a8a"></div>
<div class="abs" style="left:1431px;top:882px;font-size:14px;line-height:18px;color:#171717;letter-spacing:0.75px">23:13</div>
<div class="abs" style="left:1566px;top:882px;font-size:14px;line-height:18px;color:#171717;letter-spacing:0.75px">23:15</div>
<div class="abs" style="left:1700px;top:882px;font-size:14px;line-height:18px;color:#c81e1e;font-weight:bold;letter-spacing:0.4px">1.75</div>
<div class="abs" style="left:1810px;top:882px;font-size:14px;line-height:18px;color:#171717;white-space:nowrap;letter-spacing:0.4px">ąań 3</div>
<div class="abs" style="left:307px;top:982px;width:16px;height:16px;border:2px solid #111;border-radius:3px"></div>
<div class="abs" style="left:356px;top:981px;font-size:14px;line-height:18px;color:#8a8a8a;white-space:nowrap;letter-spacing:0.8px">56</div>
<div class="abs" style="left:416px;top:981px;font-size:14px;line-height:18px;color:#171717;white-space:nowrap;letter-spacing:0.75px">23-Feb-26</div>
<div class="abs" style="left:506px;top:981px;font-size:14px;line-height:18px;color:#171717;white-space:nowrap;letter-spacing:0px">Line1</div>
<div class="abs" style="left:596px;top:981px;font-size:14px;line-height:18px;color:#171717;white-space:nowrap;letter-spacing:0.3px">6C1F1611</div>
<div class="abs" style="left:726px;top:981px;font-size:14px;line-height:18px;color:#171717;white-space:nowrap;letter-spacing:-0.1px">T11V1NDNTA.AKOR</div>
<div class="abs" style="left:916px;top:981px;font-size:14px;line-height:18px;color:#171717;white-space:nowrap;letter-spacing:0.6px">204</div>
<div class="abs" style="left:1030px;top:967px;width:184px;height:47px;border:1px solid #2e7d4f;border-radius:6px 0 0 6px;background:#fff"></div><div class="abs" style="left:1043px;top:969px;font-size:14px;line-height:20px;color:#171717;white-space:nowrap;letter-spacing:0.4px">rework Plate<br>swell25TX Good</div><div class="abs" style="left:1201px;top:971px;width:0;height:0;border-left:5px solid transparent;border-right:5px solid transparent;border-bottom:6px solid #8a8a8a"></div><div class="abs" style="left:1201px;top:986px;width:10px;height:10px;border-radius:50%;background:#8a8a8a"></div><div class="abs" style="left:1201px;top:1003px;width:0;height:0;border-left:5px solid transparent;border-right:5px solid transparent;border-top:6px solid #8a8a8a"></div>
<div class="abs" style="left:1230px;top:977px;width:184px;height:26px;border:1px solid #2e7d4f;border-radius:6px 0 0 6px;background:#fff"></div><div class="abs" style="left:1243px;top:981px;font-size:14px;line-height:20px;color:#171717;white-space:nowrap;letter-spacing:0.4px">change plate</div><div class="abs" style="left:1401px;top:980px;width:0;height:0;border-left:5px solid transparent;border-right:5px solid transparent;border-bottom:6px solid #8a8a8a"></div><div class="abs" style="left:1401px;top:993px;width:0;height:0;border-left:5px solid transparent;border-right:5px solid transparent;border-top:6px solid #8a8a8a"></div>
<div class="abs" style="left:1431px;top:981px;font-size:14px;line-height:18px;color:#171717;letter-spacing:0.75px">22:55</div>
<div class="abs" style="left:1566px;top:981px;font-size:14px;line-height:18px;color:#171717;letter-spacing:0.75px">22:59</div>
<div class="abs" style="left:1700px;top:981px;font-size:14px;line-height:18px;color:#c81e1e;font-weight:bold;letter-spacing:0.4px">4.67</div>
<div class="abs" style="left:1810px;top:981px;font-size:14px;line-height:18px;color:#171717;white-space:nowrap;letter-spacing:0.4px">Line Stop</div>
<div class="abs" style="left:307px;top:1071px;width:16px;height:16px;border:2px solid #111;border-radius:3px"></div>
<div class="abs" style="left:356px;top:1070px;font-size:14px;line-height:18px;color:#8a8a8a;white-space:nowrap;letter-spacing:0.8px">57</div>
<div class="abs" style="left:416px;top:1070px;font-size:14px;line-height:18px;color:#171717;white-space:nowrap;letter-spacing:0.75px">23-Feb-26</div>
<div class="abs" style="left:506px;top:1070px;font-size:14px;line-height:18px;color:#171717;white-space:nowrap;letter-spacing:0px">Line1</div>
<div class="abs" style="left:596px;top:1070px;font-size:14px;line-height:18px;color:#171717;white-space:nowrap;letter-spacing:0.3px">6C1F1611</div>
<div class="abs" style="left:726px;top:1070px;font-size:14px;line-height:18px;color:#171717;white-space:nowrap;letter-spacing:-0.1px">T11V1NDNTA.AKOR</div>
<div class="abs" style="left:916px;top:1070px;font-size:14px;line-height:18px;color:#171717;white-space:nowrap;letter-spacing:0.6px">204</div>
<div class="abs" style="left:1030px;top:1066px;width:184px;height:26px;border:1px solid #2e7d4f;border-radius:6px 0 0 6px;background:#fff"></div><div class="abs" style="left:1043px;top:1070px;font-size:14px;line-height:20px;color:#171717;white-space:nowrap;letter-spacing:0.4px">ıaŝosınuŵrŵs</div><div class="abs" style="left:1201px;top:1069px;width:0;height:0;border-left:5px solid transparent;border-right:5px solid transparent;border-bottom:6px solid #8a8a8a"></div><div class="abs" style="left:1201px;top:1082px;width:0;height:0;border-left:5px solid transparent;border-right:5px solid transparent;border-top:6px solid #8a8a8a"></div>
<div class="abs" style="left:1230px;top:1066px;width:184px;height:26px;border:1px solid #2e7d4f;border-radius:6px 0 0 6px;background:#fff"></div><div class="abs" style="left:1243px;top:1070px;font-size:14px;line-height:20px;color:#171717;white-space:nowrap;letter-spacing:0.4px">ſuıǔnſaň?</div><div class="abs" style="left:1401px;top:1069px;width:0;height:0;border-left:5px solid transparent;border-right:5px solid transparent;border-bottom:6px solid #8a8a8a"></div><div class="abs" style="left:1401px;top:1082px;width:0;height:0;border-left:5px solid transparent;border-right:5px solid transparent;border-top:6px solid #8a8a8a"></div>
<div class="abs" style="left:1431px;top:1070px;font-size:14px;line-height:18px;color:#171717;letter-spacing:0.75px">22:52</div>
<div class="abs" style="left:1566px;top:1070px;font-size:14px;line-height:18px;color:#171717;letter-spacing:0.75px">22:54</div>
<div class="abs" style="left:1700px;top:1070px;font-size:14px;line-height:18px;color:#c81e1e;font-weight:bold;letter-spacing:0.4px">2.37</div>
<div class="abs" style="left:1810px;top:1070px;font-size:14px;line-height:18px;color:#171717;white-space:nowrap;letter-spacing:0.4px">ąań 5</div>

<!-- SCROLLBAR -->
<div class="abs" style="left:1905px;top:0;width:15px;height:1080px;background:#fdfdfd"></div>
<div class="abs" style="left:1908px;top:18px;width:9px;height:877px;background:#8a8a8a;border-radius:5px"></div>
<div class="abs" style="left:1908px;top:5px;width:0;height:0;border-left:4.5px solid transparent;border-right:4.5px solid transparent;border-bottom:6px solid #8a8a8a"></div>
<div class="abs" style="left:1908px;top:1069px;width:0;height:0;border-left:4.5px solid transparent;border-right:4.5px solid transparent;border-top:6px solid #8a8a8a"></div>

</body></html>
